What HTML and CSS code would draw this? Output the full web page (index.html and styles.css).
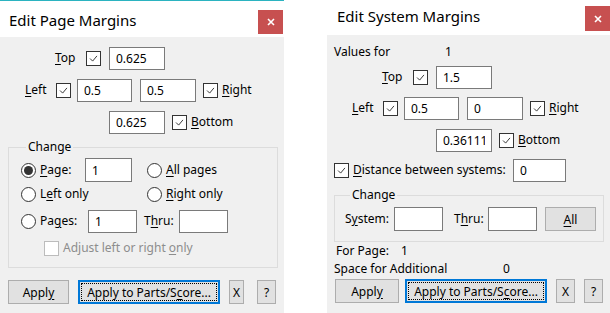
FILE: index.html
```html
<!DOCTYPE html>
<html lang="en">
<head>
<meta charset="UTF-8">
<title>Edit Margins</title>
<link rel="stylesheet" href="styles.css">
</head>
<body>
<div class="desk">

    <!-- Edit Page Margins -->
    <div class="win win-page">
        <div class="titlebar">
            <span class="title">Edit Page Margins</span>
            <span class="close"><svg viewBox="0 0 8 8" width="8" height="8"><path d="M1 1L7 7M7 1L1 7" stroke="#fff" stroke-width="1.6"/></svg></span>
        </div>
        <div class="body">
            <div class="row row-top page-top">
                <span class="lbl w-top"><u>T</u>op</span>
                <span class="chk"><svg viewBox="0 0 15 15"><path d="M3.5 7.5l3 3 5-6" fill="none" stroke="#333" stroke-width="1.1"/></svg></span>
                <input class="field w-56 ml-8" type="text" value="0.625">
            </div>
            <div class="row row-lr">
                <span class="lbl w-left"><u>L</u>eft</span>
                <span class="chk"><svg viewBox="0 0 15 15"><path d="M3.5 7.5l3 3 5-6" fill="none" stroke="#333" stroke-width="1.1"/></svg></span>
                <input class="field w-55 ml-6" type="text" value="0.5">
                <input class="field w-56 ml-8" type="text" value="0.5">
                <span class="chk ml-7"><svg viewBox="0 0 15 15"><path d="M3.5 7.5l3 3 5-6" fill="none" stroke="#333" stroke-width="1.1"/></svg></span>
                <span class="lbl ml-4"><u>R</u>ight</span>
            </div>
            <div class="row row-bottom">
                <input class="field w-56" type="text" value="0.625">
                <span class="chk ml-7"><svg viewBox="0 0 15 15"><path d="M3.5 7.5l3 3 5-6" fill="none" stroke="#333" stroke-width="1.1"/></svg></span>
                <span class="lbl ml-4"><u>B</u>ottom</span>
            </div>

            <fieldset class="group page-group">
                <legend>Change</legend>
                <div class="row grp-row mt-3">
                    <div class="col1">
                        <span class="radio on"></span>
                        <span class="lbl ml-4 w-45"><u>P</u>age:</span>
                        <input class="field w-47 tall" type="text" value="1">
                    </div>
                    <span class="radio"></span>
                    <span class="lbl ml-4"><u>A</u>ll pages</span>
                </div>
                <div class="row grp-row">
                    <div class="col1">
                        <span class="radio"></span>
                        <span class="lbl ml-4">L<u>e</u>ft only</span>
                    </div>
                    <span class="radio"></span>
                    <span class="lbl ml-4"><u>R</u>ight only</span>
                </div>
                <div class="row grp-row mt-3">
                    <span class="radio"></span>
                    <span class="lbl ml-4 w-48">Pa<u>g</u>es:</span>
                    <input class="field w-49" type="text" value="1">
                    <span class="lbl ml-7 w-35">T<u>h</u>ru:</span>
                    <input class="field w-49" type="text" value="">
                </div>
                <div class="row grp-row mt-3 adjust">
                    <span class="chk off"></span>
                    <span class="lbl ml-4 dim">Adjust left or right <u>o</u>nly</span>
                </div>
            </fieldset>

            <div class="row buttons page-buttons">
                <button class="btn w-61">Appl<u>y</u></button>
                <button class="btn btn-focus w-142 ml-9"><span>Apply to Parts/S<u>c</u>ore...</span></button>
                <button class="btn w-15 ml-9">X</button>
                <button class="btn w-19 ml-13">?</button>
            </div>
        </div>
    </div>

    <!-- Edit System Margins -->
    <div class="win win-system">
        <div class="titlebar">
            <span class="title">Edit System Margins</span>
            <span class="close"><svg viewBox="0 0 8 8" width="8" height="8"><path d="M1 1L7 7M7 1L1 7" stroke="#fff" stroke-width="1.6"/></svg></span>
        </div>
        <div class="body">
            <div class="row row-text values">
                <span class="lbl w-111">Values for</span>
                <span class="lbl">1</span>
            </div>
            <div class="row row-top sys-top">
                <span class="lbl w-top"><u>T</u>op</span>
                <span class="chk"><svg viewBox="0 0 15 15"><path d="M3.5 7.5l3 3 5-6" fill="none" stroke="#333" stroke-width="1.1"/></svg></span>
                <input class="field w-56 ml-8" type="text" value="1.5">
            </div>
            <div class="row row-lr sys-lr">
                <span class="lbl w-left"><u>L</u>eft</span>
                <span class="chk"><svg viewBox="0 0 15 15"><path d="M3.5 7.5l3 3 5-6" fill="none" stroke="#333" stroke-width="1.1"/></svg></span>
                <input class="field w-55 ml-6" type="text" value="0.5">
                <input class="field w-56 ml-8" type="text" value="0">
                <span class="chk ml-7"><svg viewBox="0 0 15 15"><path d="M3.5 7.5l3 3 5-6" fill="none" stroke="#333" stroke-width="1.1"/></svg></span>
                <span class="lbl ml-4"><u>R</u>ight</span>
            </div>
            <div class="row row-bottom">
                <input class="field w-56" type="text" value="0.36111">
                <span class="chk ml-7"><svg viewBox="0 0 15 15"><path d="M3.5 7.5l3 3 5-6" fill="none" stroke="#333" stroke-width="1.1"/></svg></span>
                <span class="lbl ml-4"><u>B</u>ottom</span>
            </div>
            <div class="row distance">
                <span class="chk"><svg viewBox="0 0 15 15"><path d="M3.5 7.5l3 3 5-6" fill="none" stroke="#333" stroke-width="1.1"/></svg></span>
                <span class="lbl ml-4 w-156"><u>D</u>istance between systems:</span>
                <input class="field w-53 ml-4" type="text" value="0">
            </div>

            <fieldset class="group sys-group">
                <legend>Change</legend>
                <div class="row grp-row mt-4">
                    <span class="lbl w-49">S<u>y</u>stem:</span>
                    <input class="field w-49 tall" type="text" value="">
                    <span class="lbl ml-11 w-34">T<u>h</u>ru:</span>
                    <input class="field w-49 tall" type="text" value="">
                    <button class="btn w-51 ml-8"><u>A</u>ll</button>
                </div>
            </fieldset>

            <div class="row row-text for-page">
                <span class="lbl w-65">For Page:</span>
                <span class="lbl">1</span>
            </div>
            <div class="row row-text space">
                <span class="lbl w-169">Space for Additional</span>
                <span class="lbl">0</span>
            </div>

            <div class="row buttons sys-buttons">
                <button class="btn w-64">Appl<u>y</u></button>
                <button class="btn btn-focus w-142 ml-6"><span>Apply to Parts/S<u>c</u>ore...</span></button>
                <button class="btn w-19 ml-9">X</button>
                <button class="btn w-19 ml-9">?</button>
            </div>
        </div>
    </div>

</div>
</body>
</html>
```

FILE: styles.css
```css
/* Windows style dialogs */
body {
    margin: 0;
    padding: 0;
    background-color: #fff;
    font-family: 'Noto Sans', 'Open Sans', sans-serif;
    font-size: 12px;
    color: #000;
    overflow: hidden;
}

.desk {
    display: flex;
    align-items: flex-start;
    width: 610px;
    height: 313px;
    overflow: hidden;
}

.win {
    flex-shrink: 0;
    width: 284px;
    height: 313px;
    display: flex;
    flex-direction: column;
}

.win-system {
    margin-left: 43px;
}

/* title bar */
.titlebar {
    display: flex;
    align-items: flex-start;
    justify-content: space-between;
    background-color: #fff;
    flex-shrink: 0;
}

.win-page .titlebar {
    height: 36px;
    border-top: 1px solid #2bb3c0;
    padding-left: 9px;
}

.win-system .titlebar {
    height: 35px;
    padding-left: 10px;
}

.title {
    font-size: 15px;
    line-height: 20px;
    color: #000;
}

.win-page .title {
    margin-top: 9px;
}

.win-system .title {
    margin-top: 6px;
}

.close {
    width: 25px;
    height: 24px;
    background-color: #c75050;
    display: flex;
    align-items: center;
    justify-content: center;
}

.win-page .close {
    margin-top: 9px;
    margin-right: 1px;
}

.win-system .close {
    margin-top: 6px;
    margin-right: 1px;
    height: 25px;
}

.body {
    flex: 1;
    background-color: #f0f0f0;
}

/* rows */
.row {
    display: flex;
    align-items: center;
    height: 24px;
    white-space: nowrap;
}

.row-text {
    height: 16px;
}

.lbl {
    line-height: 16px;
    flex-shrink: 0;
}

.dim {
    color: #8d8d8d;
}

u {
    text-decoration: underline;
    text-underline-offset: 2px;
}

.row-top {
    padding-left: 55px;
}

.page-top {
    margin-top: 9px;
}

.row-lr {
    padding-left: 25px;
    margin-top: 8px;
}

.row-bottom {
    padding-left: 109px;
    margin-top: 8px;
}

.values {
    margin-top: 9px;
    padding-left: 7px;
}

.sys-top {
    margin-top: 5px;
}

.sys-lr {
    margin-top: 7px;
}

.distance {
    margin-top: 6px;
    padding-left: 7px;
}

.for-page {
    margin-top: 1px;
    padding-left: 9px;
}

.space {
    margin-top: 2px;
    padding-left: 7px;
}

/* inputs */
.field {
    box-sizing: border-box;
    height: 23px;
    margin: 0;
    padding: 0 6px;
    border: 1px solid #7a7a7a;
    background-color: #fff;
    font-family: inherit;
    font-size: 12px;
    color: #000;
    outline: none;
    flex-shrink: 0;
}

.field.tall {
    height: 24px;
}

/* check boxes */
.chk {
    box-sizing: border-box;
    width: 15px;
    height: 15px;
    border: 1px solid #333;
    background-color: #fff;
    flex-shrink: 0;
    display: flex;
}

.chk svg {
    width: 13px;
    height: 13px;
}

.chk.off {
    border-color: #bcbcbc;
}

/* radio buttons */
.radio {
    box-sizing: border-box;
    width: 15px;
    height: 15px;
    border: 1px solid #333;
    border-radius: 50%;
    background-color: #fff;
    flex-shrink: 0;
    display: flex;
    align-items: center;
    justify-content: center;
}

.radio.on::after {
    content: "";
    width: 9px;
    height: 9px;
    border-radius: 50%;
    background-color: #333;
}

/* group boxes */
.group {
    box-sizing: border-box;
    width: 270px;
    margin: 5px 0 0 0;
    padding: 0 0 0 12px;
    border: 1px solid #dcdcdc;
    min-width: 0;
}

.group legend {
    padding: 0 2px;
    margin-left: 5px;
    line-height: 16px;
}

.page-group {
    margin-left: 8px;
    padding-bottom: 7px;
}

.sys-group {
    margin-left: 7px;
    padding-left: 10px;
    padding-bottom: 10px;
}

.col1 {
    display: flex;
    align-items: center;
    width: 126px;
}

.adjust {
    padding-left: 23px;
}

/* buttons */
.buttons {
    padding-left: 8px;
}

.page-buttons {
    margin-top: 12px;
}

.sys-buttons {
    margin-top: 2px;
}

.btn {
    box-sizing: border-box;
    height: 24px;
    padding: 0;
    margin: 0;
    border: 1px solid #adadad;
    background-color: #e1e1e1;
    font-family: inherit;
    font-size: 12px;
    color: #000;
    flex-shrink: 0;
    display: flex;
    align-items: center;
    justify-content: center;
}

.btn-focus {
    border: 2px solid #0078d7;
    padding: 1px;
}

.btn-focus span {
    box-sizing: border-box;
    width: 100%;
    height: 100%;
    border: 1px dotted #000;
    display: flex;
    align-items: center;
    justify-content: center;
}

/* widths and gaps */
.w-top { width: 31px; }
.w-left { width: 31px; }
.w-15 { width: 15px; }
.w-19 { width: 19px; }
.w-34 { width: 34px; }
.w-35 { width: 35px; }
.w-45 { width: 45px; }
.w-47 { width: 47px; }
.w-48 { width: 48px; }
.w-49 { width: 49px; }
.w-51 { width: 51px; }
.w-53 { width: 53px; }
.w-55 { width: 55px; }
.w-56 { width: 56px; }
.w-61 { width: 61px; }
.w-64 { width: 64px; }
.w-65 { width: 65px; }
.w-111 { width: 111px; }
.w-142 { width: 142px; }
.w-156 { width: 156px; }
.w-169 { width: 169px; }

.ml-4 { margin-left: 4px; }
.ml-6 { margin-left: 6px; }
.ml-7 { margin-left: 7px; }
.ml-8 { margin-left: 8px; }
.ml-9 { margin-left: 9px; }
.ml-11 { margin-left: 11px; }
.ml-13 { margin-left: 13px; }
.mt-3 { margin-top: 3px; }
.mt-4 { margin-top: 4px; }
```
